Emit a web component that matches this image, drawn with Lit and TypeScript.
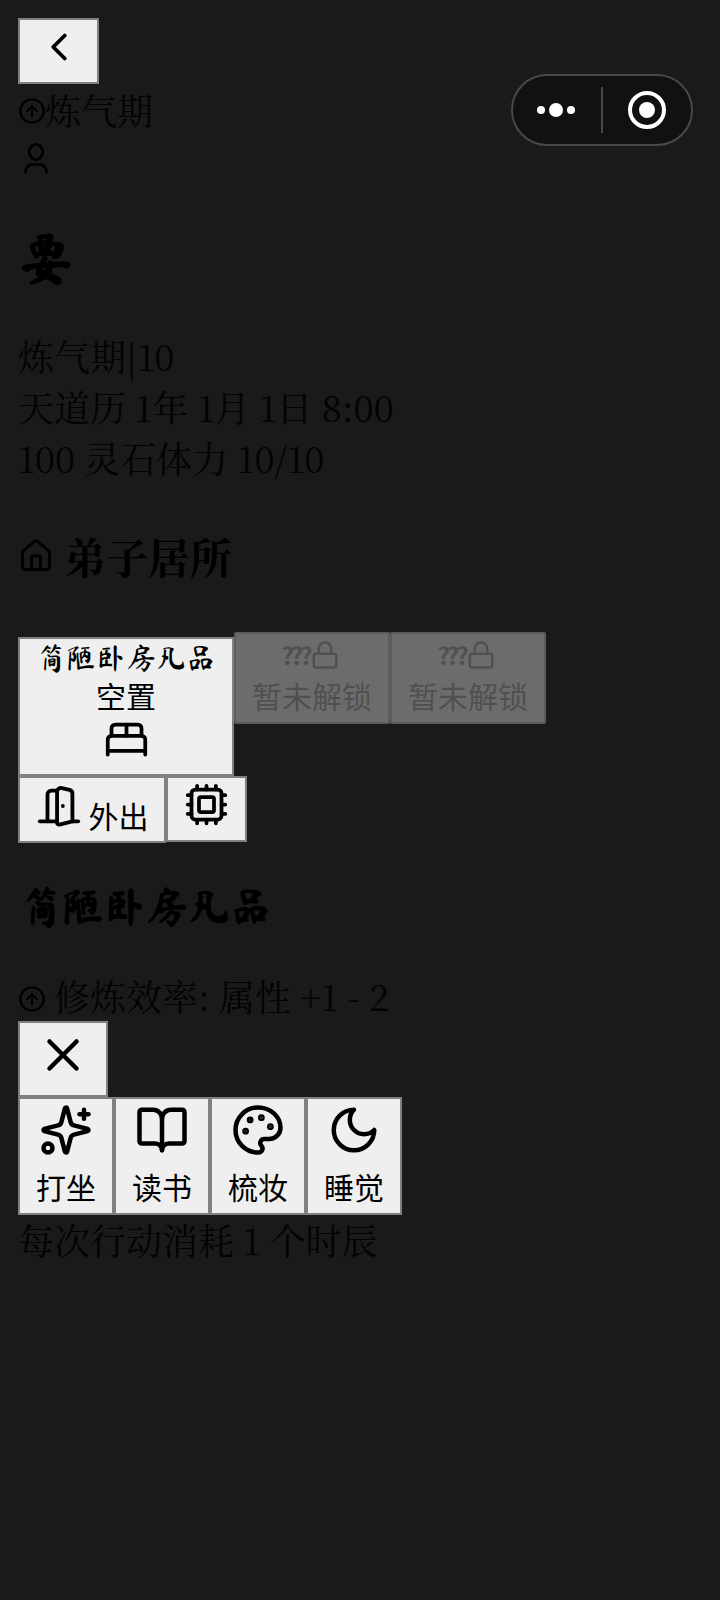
import { LitElement, html, css, svg } from "lit";
import { customElement } from "lit/decorators.js";

const I: Record<string, unknown> = {
  back: svg`<path d="m15 18-6-6 6-6"/>`,
  up: svg`<circle cx="12" cy="12" r="10"/><path d="m16 12-4-4-4 4"/><path d="M12 16V8"/>`,
  house: svg`<path d="M15 21v-8a1 1 0 0 0-1-1h-4a1 1 0 0 0-1 1v8"/><path d="M3 10a2 2 0 0 1 .709-1.528l7-5.999a2 2 0 0 1 2.582 0l7 5.999A2 2 0 0 1 21 10v9a2 2 0 0 1-2 2H5a2 2 0 0 1-2-2z"/>`,
  bed: svg`<path d="M2 20v-8a2 2 0 0 1 2-2h16a2 2 0 0 1 2 2v8"/><path d="M4 10V6a2 2 0 0 1 2-2h12a2 2 0 0 1 2 2v4"/><path d="M12 4v6"/><path d="M2 18h20"/>`,
  door: svg`<path d="M11 20H2"/><path d="M11 4.562v16.157a1 1 0 0 0 1.242.97L19 20V5.562a2 2 0 0 0-1.515-1.94l-4-1A2 2 0 0 0 11 4.561z"/><path d="M11 4H8a2 2 0 0 0-2 2v14"/><path d="M14 12h.01"/><path d="M22 20h-3"/>`,
  cpu: svg`<rect x="4" y="4" width="16" height="16" rx="2"/><rect x="8" y="8" width="8" height="8" rx="1"/><path d="M12 20v2M12 2v2M17 20v2M17 2v2M2 12h2M2 17h2M2 7h2M20 12h2M20 17h2M20 7h2M7 20v2M7 2v2"/>`,
  x: svg`<path d="M18 6 6 18"/><path d="m6 6 12 12"/>`,
  sparkles: svg`<path d="M9.937 15.5A2 2 0 0 0 8.5 14.063l-6.135-1.582a.5.5 0 0 1 0-.962L8.5 9.936A2 2 0 0 0 9.937 8.5l1.582-6.135a.5.5 0 0 1 .963 0L14.063 8.5A2 2 0 0 0 15.5 9.937l6.135 1.581a.5.5 0 0 1 0 .964L15.5 14.063a2 2 0 0 0-1.437 1.437l-1.582 6.135a.5.5 0 0 1-.963 0z"/><path d="M20 3v4"/><path d="M22 5h-4"/><circle cx="4" cy="20" r="2"/>`,
  book: svg`<path d="M12 7v14"/><path d="M3 18a1 1 0 0 1-1-1V4a1 1 0 0 1 1-1h5a4 4 0 0 1 4 4 4 4 0 0 1 4-4h5a1 1 0 0 1 1 1v13a1 1 0 0 1-1 1h-6a3 3 0 0 0-3 3 3 3 0 0 0-3-3z"/>`,
  palette: svg`<path d="M12 22a1 1 0 0 1 0-20 10 9 0 0 1 10 9 5 5 0 0 1-5 5h-2.25a1.75 1.75 0 0 0-1.4 2.8l.3.4a1.75 1.75 0 0 1-1.4 2.8z"/><circle cx="13.5" cy="6.5" r=".5" fill="currentColor"/><circle cx="17.5" cy="10.5" r=".5" fill="currentColor"/><circle cx="6.5" cy="12.5" r=".5" fill="currentColor"/><circle cx="8.5" cy="7.5" r=".5" fill="currentColor"/>`,
  moon: svg`<path d="M12 3a6 6 0 0 0 9 9 9 9 0 1 1-9-9Z"/>`,
  lock: svg`<rect x="3" y="11" width="18" height="11" rx="2"/><path d="M7 11V7a5 5 0 0 1 10 0v4"/>`,
};

const icon = (n: string, s: number) =>
  html`<svg class="ic" width=${s} height=${s} viewBox="0 0 24 24" fill="none" stroke="currentColor" stroke-width="2" stroke-linecap="round" stroke-linejoin="round">${I[n]}</svg>`;

@customElement("app-root")
export class AppRoot extends LitElement {
  static styles = css`
    :host { display: block; min-height: 1600px; background: #1a1a1a; color: #030303; font-family: "Noto Serif CJK SC", "Source Han Serif SC", "AR PL UMing CN", "Liberation Serif", serif; font-size: 36px; position: relative; overflow: hidden; --callig: "Ma Shan Zheng", "Zhi Mang Xing", "Liu Jian Mao Cao", "AR PL UKai CN", "KaiTi", "STKaiti", "Noto Serif CJK SC", cursive; }
    .page { padding: 18px; box-sizing: border-box; }
    .ic { display: block; flex: none; }
    .line { line-height: 51px; }
    .last { margin-top: -1px; }
    button { font-family: "Noto Sans CJK SC", sans-serif; font-size: 30px; background: #efefef; color: #000; border: 2px solid #808080; padding: 0; margin: 0; display: flex; flex-direction: column; align-items: center; justify-content: center; }
    .back { width: 81px; height: 66px; padding-bottom: 8px; }
    .realm { display: flex; align-items: center; height: 50px; }
    .realm .ic { margin-top: 4px; margin-right: -1px; color: #000; }
    .user { height: 48px; margin-left: 2px; padding-top: 8px; box-sizing: border-box; color: #000; }
    .name { font-family: var(--callig); font-weight: bold; font-size: 56px; margin-top: 38px; line-height: 76px; color: #000; }
    .info { margin-top: 34px; }
    .home { display: flex; align-items: center; gap: 10px; font-size: 42px; font-weight: bold; margin-top: 43px; line-height: 60px; color: #000; }
    .rooms { display: flex; align-items: flex-start; margin-top: 46px; }
    .room { width: 216px; height: 139px; margin-top: 5px; justify-content: flex-start; }
    .rn { font-family: var(--callig); font-size: 30px; line-height: 38px; }
    .vac { line-height: 37px; }
    .room .ic { margin-top: 3px; }
    .locked { width: 156px; height: 92px; background: #6c6c6c; color: #505050; border: 2px solid #5c5c5c; border-radius: 2px; gap: 2px; }
    .ln { display: flex; align-items: center; font-size: 24px; line-height: 32px; margin-left: -3px; }
    .q { font-weight: bold; letter-spacing: -3px; }
    .acts { display: flex; align-items: flex-start; }
    .out { flex-direction: row; width: 148px; height: 67px; gap: 7px; }
    .out span { margin-top: 10px; line-height: 44px; }
    .out .ic { margin-bottom: 8px; }
    .chip { width: 81px; height: 66px; padding-bottom: 9px; }
    .title { font-family: var(--callig); font-weight: bold; font-size: 42px; margin-top: 28px; padding-left: 2px; line-height: 70px; color: #000; }
    .eff { display: flex; align-items: center; gap: 8px; margin-top: 28px; height: 52px; }
    .eff .ic { margin-top: 8px; color: #000; }
    .close { width: 90px; height: 76px; padding-bottom: 8px; }
    .tasks { display: flex; }
    .task { width: 96px; height: 118px; justify-content: flex-start; padding-top: 4px; gap: 7px; }
    .cap { position: absolute; left: 511px; top: 74px; width: 182px; height: 72px; box-sizing: border-box; background: #111; border: 2px solid #484848; border-radius: 36px; display: flex; align-items: center; }
    .dots { width: 88px; box-sizing: border-box; padding-right: 2px; display: flex; justify-content: center; align-items: center; gap: 4px; }
    .d { width: 8px; height: 8px; border-radius: 50%; background: #fff; }
    .D { width: 14px; height: 14px; border-radius: 50%; background: #fff; }
    .sep { width: 2px; height: 46px; background: #484848; }
    .rec { margin-left: 25px; width: 38px; height: 38px; box-sizing: border-box; border: 4px solid #fff; border-radius: 50%; display: flex; align-items: center; justify-content: center; }
    .rec i { display: block; width: 16px; height: 16px; border-radius: 50%; background: #fff; }
  `;

  render() {
    return html`
      <div class="page">
        <button class="back">${icon("back", 46)}</button>
        <div class="realm">${icon("up", 28)}<span>炼气期</span></div>
        <div class="user">
          <svg class="ic" width="32" height="36" viewBox="0 0 32 36" fill="none" stroke="currentColor" stroke-width="2.7" stroke-linecap="round">
            <ellipse cx="16" cy="10" rx="6.7" ry="7.7"/>
            <path d="M5.5 30.5v-1a7 7 0 0 1 7-7h7a7 7 0 0 1 7 7v1"/>
          </svg>
        </div>
        <div class="name">要</div>
        <div class="info">
          <div class="line">炼气期|10</div>
          <div class="line">天道历 1年 1月 1日 8:00</div>
          <div class="line">100 灵石体力 10/10</div>
        </div>
        <div class="home">${icon("house", 36)}<span>弟子居所</span></div>
        <div class="rooms">
          <button class="room"><span class="rn">简陋卧房凡品</span><span class="vac">空置</span>${icon("bed", 45)}</button>
          <button class="locked"><span class="ln"><span class="q">???</span>${icon("lock", 30)}</span><span>暂未解锁</span></button>
          <button class="locked"><span class="ln"><span class="q">???</span>${icon("lock", 30)}</span><span>暂未解锁</span></button>
        </div>
        <div class="acts">
          <button class="out">${icon("door", 46)}<span>外出</span></button>
          <button class="chip">${icon("cpu", 45)}</button>
        </div>
        <div class="title">简陋卧房凡品</div>
        <div class="eff">${icon("up", 28)}<span>修炼效率: 属性 +1 - 2</span></div>
        <button class="close">${icon("x", 54)}</button>
        <div class="tasks">
          <button class="task">${icon("sparkles", 54)}<span>打坐</span></button>
          <button class="task">${icon("book", 54)}<span>读书</span></button>
          <button class="task">${icon("palette", 54)}<span>梳妆</span></button>
          <button class="task">${icon("moon", 54)}<span>睡觉</span></button>
        </div>
        <div class="line last">每次行动消耗 1 个时辰</div>
      </div>
      <div class="cap">
        <div class="dots"><span class="d"></span><span class="D"></span><span class="d"></span></div>
        <span class="sep"></span>
        <span class="rec"><i></i></span>
      </div>
    `;
  }
}
